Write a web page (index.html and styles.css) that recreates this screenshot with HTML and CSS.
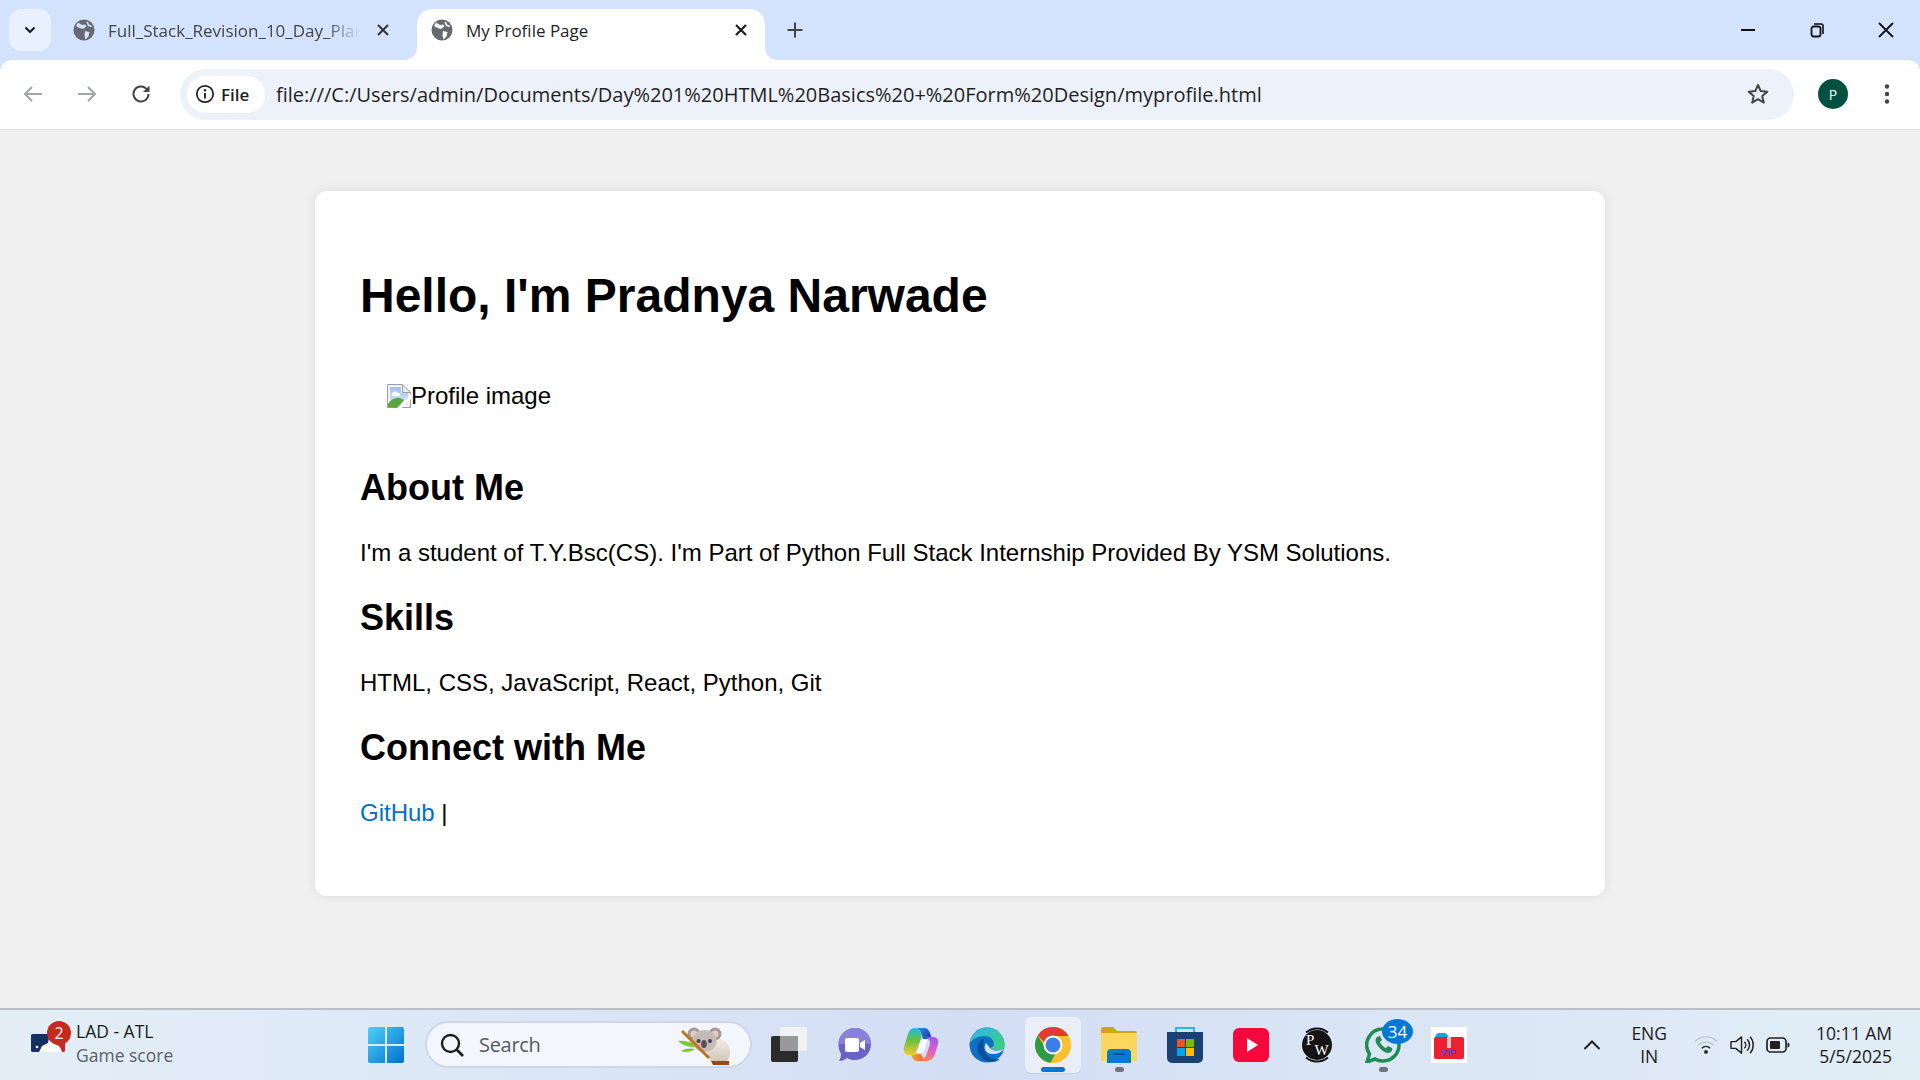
FILE: index.html
```html
<!DOCTYPE html>
<html lang="en">
<head>
<meta charset="utf-8">
<title>My Profile Page</title>
<link rel="stylesheet" href="styles.css">
</head>
<body>
<div class="screen">
  <header class="tabstrip">
    <button class="tab-search"><svg width="14" height="14" viewBox="0 0 14 14"><path d="M2.5 4.5 7 9l4.500-4.500" fill="none" stroke="#16202c" stroke-width="2.200"/></svg></button>
    <div class="tab">
      <svg class="globe" width="22" height="22" viewBox="0 0 22 22"><circle cx="11" cy="11" r="10.500" fill="#666a70"/><path d="M5 3.500 9 6l3-.5 1.500 2L10 10 6.500 9 3 7ZM12 12l4.500 1-1 4.500-3 3-1-4ZM15 2.500l1 3 3.500 1.500-1.500 1-3-1-1.500-3.500Z" fill="#d3e3fd"/></svg>
      <span class="tab-title fade">Full_Stack_Revision_10_Day_Plan</span>
      <svg class="close" width="14" height="14" viewBox="0 0 14 14"><path d="M2 2l10 10M12 2 2 12" stroke="#333" stroke-width="2"/></svg>
    </div>
    <div class="tab active">
      <svg class="globe" width="22" height="22" viewBox="0 0 22 22"><circle cx="11" cy="11" r="10.500" fill="#666a70"/><path d="M5 3.500 9 6l3-.5 1.500 2L10 10 6.500 9 3 7ZM12 12l4.500 1-1 4.500-3 3-1-4ZM15 2.500l1 3 3.500 1.500-1.500 1-3-1-1.500-3.500Z" fill="#fff"/></svg>
      <span class="tab-title">My Profile Page</span>
      <svg class="close" width="14" height="14" viewBox="0 0 14 14"><path d="M2 2l10 10M12 2 2 12" stroke="#1c1c1c" stroke-width="2.200"/></svg>
    </div>
    <svg class="newtab" width="18" height="18" viewBox="0 0 18 18"><path d="M9 1.500v15M1.500 9h15" stroke="#444" stroke-width="2"/></svg>
    <div class="window-controls">
      <svg width="16" height="16" viewBox="0 0 16 16"><path d="M1 8h14" stroke="#111" stroke-width="2"/></svg>
      <svg width="16" height="16" viewBox="0 0 16 16"><rect x="2.500" y="4.500" width="9" height="10" rx="2" fill="none" stroke="#111" stroke-width="1.800"/><path d="M5 2h7a2 2 0 0 1 2 2v8" fill="none" stroke="#111" stroke-width="1.600"/></svg>
      <svg width="16" height="16" viewBox="0 0 16 16"><path d="M1 1l14 14M15 1 1 15" stroke="#111" stroke-width="1.800"/></svg>
    </div>
  </header>

  <nav class="toolbar">
    <svg class="nav-icon" width="22" height="22" viewBox="0 0 22 22"><path d="M20 11H3M10 4l-7 7 7 7" fill="none" stroke="#a3a5a8" stroke-width="2"/></svg>
    <svg class="nav-icon" width="22" height="22" viewBox="0 0 22 22"><path d="M2 11h17M12 4l7 7-7 7" fill="none" stroke="#a3a5a8" stroke-width="2"/></svg>
    <svg class="nav-icon" width="22" height="22" viewBox="0 0 22 22"><path d="M18.500 11a7.500 7.500 0 1 1-2.300-5.400L18.500 8" fill="none" stroke="#444" stroke-width="2"/><path d="M19.500 2.500V9H13Z" fill="#444"/></svg>
    <div class="omnibox">
      <div class="chip">
        <svg width="20" height="20" viewBox="0 0 20 20"><circle cx="10" cy="10" r="8.200" fill="none" stroke="#222" stroke-width="1.700"/><path d="M10 9v5.500" stroke="#222" stroke-width="1.900"/><circle cx="10" cy="6.200" r="1.200" fill="#222"/></svg>
        <span>File</span>
      </div>
      <span class="url">file:///C:/Users/admin/Documents/Day%201%20HTML%20Basics%20+%20Form%20Design/myprofile.html</span>
      <svg class="star" width="24" height="24" viewBox="0 0 24 24"><path d="m12 3 2.700 6.100 6.600.6-5 4.400 1.500 6.500L12 17.200l-5.800 3.400 1.500-6.500-5-4.400 6.600-.6Z" fill="none" stroke="#444" stroke-width="2" stroke-linejoin="round"/></svg>
    </div>
    <div class="avatar">P</div>
    <svg class="menu" width="6" height="22" viewBox="0 0 6 22"><circle cx="3" cy="3.500" r="2.200" fill="#444"/><circle cx="3" cy="11" r="2.200" fill="#444"/><circle cx="3" cy="18.500" r="2.200" fill="#444"/></svg>
  </nav>

  <main class="page">
    <article class="card">
      <h1>Hello, I'm Pradnya Narwade</h1>
      <div class="broken-image">
        <svg width="24" height="24" viewBox="0 0 24 24"><defs><linearGradient id="sky" x1="0" y1="0" x2="0" y2="1"><stop offset="0" stop-color="#9fc0ee"/><stop offset="1" stop-color="#dfe9f9"/></linearGradient></defs><path d="M.5.500h15l8 8v15H.5Z" fill="#f4f4f4" stroke="#9a9ea5"/><path d="M3 3h11v6h7v12H3Z" fill="url(#sky)"/><path d="M5 10c1-3 5-3 6-1 2 0 3 2 2 3H6c-1 0-2-1-1-2Z" fill="#fff"/><path d="M15.500.500v8h8Z" fill="#e8eaed" stroke="#9a9ea5"/><path d="M1 23v-3c3-5 8-7 12-6l4 2-6 8Z" fill="#57a83a"/><path d="M24 10v5L15 24h-5Z" fill="#fff"/></svg><span>Profile image</span>
      </div>
      <section>
        <h2>About Me</h2>
        <p>I'm a student of T.Y.Bsc(CS). I'm Part of Python Full Stack Internship Provided By YSM Solutions.</p>
      </section>
      <section>
        <h2>Skills</h2>
        <p>HTML, CSS, JavaScript, React, Python, Git</p>
      </section>
      <section>
        <h2>Connect with Me</h2>
        <p><a href="#">GitHub</a> |</p>
      </section>
    </article>
  </main>

  <footer class="taskbar">
    <div class="widget">
      <div class="widget-icon">
        <svg width="34" height="18" viewBox="0 0 34 18"><rect width="34" height="18" rx="1.500" fill="#fff"/><path d="M1.500 0H19l-1 4-1 5-6 3-3 6H1.500A1.500 1.500 0 0 1 0 16.500v-15A1.500 1.500 0 0 1 1.500 0Z" fill="#142f63"/><path d="M24 0h8.500A1.500 1.500 0 0 1 34 1.500v15a1.500 1.500 0 0 1-1.500 1.500H31l-2-5-4-3-2-5Z" fill="#c8252b"/><circle cx="6" cy="13" r="1.300" fill="#fff"/></svg>
        <span class="widget-badge">2</span>
      </div>
      <div class="widget-text"><span class="widget-title">LAD - ATL</span><span class="widget-sub">Game score</span></div>
    </div>
    <svg class="start" width="36" height="36" viewBox="0 0 36 36"><defs><linearGradient id="win" x1="0" y1="0" x2="1" y2="1"><stop offset="0" stop-color="#4fd0f8"/><stop offset="1" stop-color="#0070cf"/></linearGradient></defs><path d="M2 0h15v17H0V2a2 2 0 0 1 2-2ZM19 0h15a2 2 0 0 1 2 2v15H19ZM0 19h17v17H2a2 2 0 0 1-2-2ZM19 19h17v15a2 2 0 0 1-2 2H19Z" fill="url(#win)"/></svg>
    <div class="search">
      <svg width="26" height="26" viewBox="0 0 26 26"><circle cx="11.500" cy="11.500" r="8.500" fill="none" stroke="#1c1c1c" stroke-width="2.400"/><path d="m18 18 6 6" stroke="#1c1c1c" stroke-width="2.600"/></svg>
      <span>Search</span>
      <svg class="koala" width="54" height="40" viewBox="0 0 54 40"><defs><linearGradient id="kb" x1="0" y1="0" x2="0" y2="1"><stop offset="0" stop-color="#f3ece6"/><stop offset="1" stop-color="#cdbfb2"/></linearGradient></defs><ellipse cx="41" cy="27" rx="11" ry="13" fill="url(#kb)"/><path d="M33 36h18v4H35Z" fill="#8f4a1e"/><path d="M0 16c7-1 14 1 20 6-7 1-15-1-20-6ZM3 26c5-3 10-3 14-2-4 3-10 4-14 2Z" fill="#7fc43a"/><circle cx="16" cy="9" r="6.500" fill="#a59a93"/><circle cx="16" cy="9" r="3.500" fill="#d8cfc9"/><circle cx="37" cy="9" r="6.500" fill="#a59a93"/><circle cx="37" cy="9" r="3.500" fill="#d8cfc9"/><ellipse cx="26.500" cy="16" rx="12" ry="11" fill="#c6bbb4"/><circle cx="20.500" cy="16" r="2" fill="#4a3a55"/><circle cx="32" cy="16" r="2" fill="#4a3a55"/><ellipse cx="26" cy="19" rx="2.800" ry="4" fill="#5f4a55"/><path d="M4 6 31 33" stroke="#b8771e" stroke-width="3"/></svg>
    </div>
    <div class="apps">
      <div class="app">
        <svg width="36" height="36" viewBox="0 0 36 36"><rect x="0" y="9" width="27" height="26" rx="2" fill="#2b2b2b"/><rect x="9" y="0" width="27" height="24" rx="1" fill="#f4f4f4" fill-opacity=".9"/><rect x="9" y="9" width="18" height="15" fill="#999"/></svg>
      </div>
      <div class="app">
        <svg width="36" height="36" viewBox="0 0 36 36"><path d="M18 1c9 0 16 7 16 16s-7 16-16 16c-3 0-6-.6-8-2-2 2-5 3-8 3 1-2 2-4 2-7-1.500-3-2.500-6-2.500-10C1.500 8 9 1 18 1Z" fill="#6b62c6"/><path d="M18 1c9 0 16 7 16 16H1.500C1.500 8 9 1 18 1Z" fill="#8a80d6"/><rect x="8" y="11" width="14" height="14" rx="2" fill="#fff"/><path d="m23 16 5-3v10l-5-3Z" fill="#fff"/></svg>
      </div>
      <div class="app">
        <svg width="36" height="36" viewBox="0 0 36 36"><defs><linearGradient id="co1" x1="0" y1="0" x2="1" y2=".3"><stop offset="0" stop-color="#1aa7e0"/><stop offset="1" stop-color="#1f3fc4"/></linearGradient><linearGradient id="co2" x1="0" y1="0" x2="0" y2="1"><stop offset="0" stop-color="#22b8e8"/><stop offset=".45" stop-color="#63c23f"/><stop offset="1" stop-color="#f8c92e"/></linearGradient><linearGradient id="co3" x1=".6" y1="0" x2=".4" y2="1"><stop offset="0" stop-color="#9a5af0"/><stop offset=".6" stop-color="#e65fc0"/><stop offset="1" stop-color="#f58a5a"/></linearGradient><linearGradient id="co4" x1="0" y1="0" x2="1" y2="0"><stop offset="0" stop-color="#f8a52e"/><stop offset="1" stop-color="#ef4d52"/></linearGradient></defs><path d="M12 1h9c3 0 5 2 6 5l2 6h-9l-2-6c-1-3-3-5-6-5Z" fill="url(#co1)"/><path d="M8 27h10l2 4c1 1 2 3 5 3H14c-3 0-5-3-6-7Z" fill="url(#co4)"/><path d="M12 1c-4 0-6 3-7 6L1 20c-1 4 1 8 5 8h7l3-10 2-6c1-5-1-11-6-11Z" fill="url(#co2)"/><path d="M21 10h9c4 0 6 3 5 7l-3 10c-1 4-4 7-8 7-3 0-5-1-5-3 3 0 4-2 5-5l3-9c1-3-2-7-6-7Z" fill="url(#co3)"/><path d="M18 12h7l-5 14h-7Z" fill="#fff" fill-opacity=".9"/></svg>
      </div>
      <div class="app">
        <svg width="36" height="36" viewBox="0 0 36 36"><defs><linearGradient id="ed1" x1="0" y1="0" x2="1" y2="1"><stop offset="0" stop-color="#2fb6ee"/><stop offset="1" stop-color="#3fd273"/></linearGradient></defs><circle cx="18" cy="18" r="17.500" fill="#0c71c3"/><path d="M1 15C3 6 10 .5 18 .5 28 .5 35.500 8 35.500 18.500c0 3-3 5-8 5-4 0-6-1-6-2.500 3-1 4-3 3-6-1-4-5-6-9-6-6 0-12 3-13.500 6Z" fill="url(#ed1)"/><path d="M17 16c-3 4-1 11 6 11 5 .5 9-1 12.500-5.500V36H36V21c-3 3-13 4-15 0Z" fill="#d8e2f5"/><path d="M15 12c-5 1-8 6-6 13 2 6 8 10 14 10 3 0 6-1 8-3-5 1-12-1-15-6-2-4-2-9-1-14Z" fill="#0a4f9e"/></svg>
      </div>
      <div class="app current">
        <svg width="36" height="36" viewBox="0 0 36 36"><circle cx="18" cy="18" r="18" fill="#fbc02d"/><path d="M18 0a18 18 0 0 1 15.600 9H18a9 9 0 0 0-8.600 6.400L2.800 8.400A18 18 0 0 1 18 0Z" fill="#e53a2f"/><path d="M2.800 8.400 10 20.500a9 9 0 0 0 10.500 6.100L15.500 35.800A18 18 0 0 1 2.800 8.400Z" fill="#2d9a46"/><circle cx="18" cy="18" r="9.500" fill="#fff"/><circle cx="18" cy="18" r="7.500" fill="#3f7de8"/></svg>
      </div>
      <div class="app dot">
        <svg width="36" height="36" viewBox="0 0 36 36"><path d="M0 2a2 2 0 0 1 2-2h10l4 4h18a2 2 0 0 1 2 2v6H0Z" fill="#d8a215"/><path d="M0 6h36v28H0Z" fill="#fbd75e"/><path d="M6 36V26a4 4 0 0 1 4-4h16a4 4 0 0 1 4 4v10Z" fill="#0a7ad1"/><rect x="12" y="26" width="12" height="2" fill="#064f8e"/></svg>
      </div>
      <div class="app">
        <svg width="36" height="36" viewBox="0 0 36 36"><path d="M9 6V1h18v5" fill="none" stroke="#29b6e8" stroke-width="2"/><path d="M0 5h36v26a5 5 0 0 1-5 5H5a5 5 0 0 1-5-5Z" fill="#1a4173"/><rect x="10" y="12" width="8" height="8" fill="#f25022"/><rect x="19" y="12" width="8" height="8" fill="#7fba00"/><rect x="10" y="21" width="8" height="8" fill="#00a4ef"/><rect x="19" y="21" width="8" height="8" fill="#ffb900"/></svg>
      </div>
      <div class="app">
        <svg width="36" height="36" viewBox="0 0 36 36"><rect y="1" width="36" height="34" rx="6" fill="#f5093c"/><path d="m14 11 11 7-11 7Z" fill="#fff"/></svg>
      </div>
      <div class="app">
        <svg width="36" height="36" viewBox="0 0 36 36"><circle cx="18" cy="18" r="15" fill="#141414"/><path d="M7 5.500A17 17 0 0 1 29 5.500M29 30.500A17 17 0 0 1 7 30.500" fill="none" stroke="#141414" stroke-width="2"/><text class="pw-mark" x="7" y="18">P</text><text class="pw-mark" x="15.500" y="28">W</text></svg>
      </div>
      <div class="app dot">
        <svg width="36" height="36" viewBox="0 0 36 36"><path d="M18 2a16 16 0 0 1 0 32c-3 0-6-.8-8-2l-8 3 2.500-8A16 16 0 0 1 18 2Z" fill="none" stroke="#1f8c55" stroke-width="3.500"/><path d="M12 10c-2 2-2 5 1 9s7 7 10 7 5-3 4-5l-4-2-2 2c-2-.5-5-3.500-6-6l2-2-2-4Z" fill="#1f8c55"/></svg>
        <span class="app-badge">34</span>
      </div>
      <div class="app">
        <svg width="36" height="36" viewBox="0 0 36 36"><rect width="36" height="36" fill="#fff"/><path d="M4 11c0-3 2-5 5-5h4c2 0 4 2 5 5Z" fill="#1ba1e2"/><rect x="3" y="10" width="30" height="22" rx="2" fill="#ed2030"/><rect x="16" y="10" width="4" height="11" fill="#f5c0c8"/><text class="zip-mark" x="18" y="29">ZIP</text></svg>
      </div>
    </div>
    <div class="tray">
      <svg width="18" height="12" viewBox="0 0 18 12"><path d="M1.500 10 9 2.500l7.500 7.500" fill="none" stroke="#222" stroke-width="2"/></svg>
      <div class="lang"><span>ENG</span><span>IN</span></div>
      <div class="status">
        <svg width="24" height="22" viewBox="0 0 26 22"><path d="M1 7a17 17 0 0 1 24 0M5 11a11.500 11.500 0 0 1 16 0" fill="none" stroke="#b9bfc5" stroke-width="1.300"/><path d="M8.500 14.500a6 6 0 0 1 9 0" fill="none" stroke="#222" stroke-width="1.500"/><circle cx="13" cy="18.500" r="2" fill="#222"/></svg>
        <svg width="24" height="22" viewBox="0 0 25 22"><path d="M1 7.500h5L12 2.500v17L6 14.500H1Z" fill="none" stroke="#222" stroke-width="1.500" stroke-linejoin="round"/><path d="M15 7.500a5 5 0 0 1 0 7M18 5a9 9 0 0 1 0 12M21 2.500a13 13 0 0 1 0 17" fill="none" stroke="#222" stroke-width="1.500"/></svg>
        <svg width="24" height="16" viewBox="0 0 24 16"><rect x="1" y="1" width="19" height="14" rx="3.500" fill="none" stroke="#222" stroke-width="1.700"/><rect x="4" y="4" width="10" height="8" rx="1" fill="#222"/><path d="M21.500 5.500c1.500 0 2 1 2 2.500s-.5 2.500-2 2.500Z" fill="#222"/></svg>
      </div>
      <div class="clock"><span>10:11 AM</span><span>5/5/2025</span></div>
    </div>
  </footer>
</div>
</body>
</html>
```
FILE: styles.css
```css
* { box-sizing: border-box; }
html, body { margin: 0; height: 100%; overflow: hidden; }
body { font-family: "Open Sans", "Noto Sans", sans-serif; }
.screen { width: 1920px; height: 1080px; display: flex; flex-direction: column; background: #d3e3fd; }

.tabstrip { height: 60px; flex: none; background: #d3e3fd; display: flex; align-items: flex-start; padding: 9px 0 0 9px; }
.tab-search { width: 42px; height: 42px; border: 0; border-radius: 12px; background: #e9f0fe; padding: 0; display: flex; align-items: center; justify-content: center; }
.tab { height: 51px; display: flex; align-items: center; flex: none; padding-bottom: 9px; }
.tab:not(.active) { width: 357px; padding-left: 22px; padding-right: 18px; }
.tab.active { width: 348px; background: #fff; border-radius: 15px 15px 0 0; padding-left: 14px; padding-right: 17px; margin-left: 9px; position: relative; }
.tab.active::before, .tab.active::after { content: ""; position: absolute; bottom: 0; width: 12px; height: 12px; }
.tab.active::before { left: -12px; background: radial-gradient(circle at 0 0, #d3e3fd 11.500px, #fff 12px); }
.tab.active::after { right: -12px; background: radial-gradient(circle at 100% 0, #d3e3fd 11.500px, #fff 12px); }
.globe { flex: none; }
.tab-title { flex: 1; min-width: 0; margin-left: 13px; font-size: 17px; white-space: nowrap; color: #1f1f1f; }
.tab-title.fade { color: #444; -webkit-mask-image: linear-gradient(90deg, #000 218px, transparent 252px); mask-image: linear-gradient(90deg, #000 218px, transparent 252px); }
.close { flex: none; margin-left: 8px; }
.tab.active .close { margin-left: 18px; }
.newtab { margin: 12px 0 0 21px; flex: none; }
.window-controls { margin-left: auto; display: flex; gap: 53px; padding: 13px 26px 0 0; }

.toolbar { height: 70px; flex: none; background: #fff; border-bottom: 1px solid #dcdfe3; display: flex; align-items: center; border-radius: 12px 12px 0 0; padding: 0 16px 1px 22px; }
.nav-icon { flex: none; margin-right: 32px; }
.nav-icon:nth-child(3) { margin-right: 28px; }
.omnibox { width: 1614px; height: 51px; flex: none; background: #edf2fa; border-radius: 26px; display: flex; align-items: center; padding: 0 24px 0 7px; }
.chip { height: 37px; width: 78px; border-radius: 19px; background: #fff; display: flex; align-items: center; gap: 6px; padding-left: 8px; font-size: 17px; font-weight: 600; color: #1f1f1f; }
.url { margin-left: 11px; font-size: 20px; color: #1f1f1f; white-space: nowrap; flex: 1; }
.star { flex: none; }
.avatar { width: 30px; height: 30px; margin-left: 24px; border-radius: 50%; background: #00513f; color: #fff; display: flex; align-items: center; justify-content: center; font-size: 14px; flex: none; }
.menu { margin-left: 36px; flex: none; }

.page { flex: 1; min-height: 0; background: #f0f0f0; padding-top: 61px; }
.card { width: 1290px; height: 705px; margin: 0 auto; background: #fff; border-radius: 12px; box-shadow: 0 0 12px rgba(0,0,0,.08); padding: 45px; font-family: "Liberation Sans", Arial, sans-serif; color: #000; }
h1 { font-size: 48px; line-height: 55px; margin: 32px 0 0; font-weight: 700; }
.broken-image { display: flex; align-items: center; height: 30px; margin: 58px 0 0 27px; font-size: 24px; }
.broken-image svg { flex: none; }
h2 { font-size: 36px; line-height: 41px; margin: 0; font-weight: 700; }
.broken-image + section { margin-top: 56px; }
section + section { margin-top: 30px; }
p { font-size: 24px; line-height: 28px; margin: 31px 0 0; }
a { color: #0070c9; text-decoration: none; }

.taskbar { height: 72px; flex: none; border-top: 2px solid #b9bfc6; background: linear-gradient(90deg, #e3eef7 0%, #dce8f6 25%, #d3def5 50%, #dbe6f5 75%, #e2eef6 100%); display: flex; align-items: center; padding: 0 0 1px 31px; }
.widget { width: 341px; display: flex; align-items: center; flex: none; }
.widget-icon { position: relative; width: 34px; height: 18px; margin-bottom: 4px; }
.widget-icon svg { display: block; }
.widget-badge { position: absolute; left: 16px; top: -13px; width: 24px; height: 24px; border-radius: 50%; background: #c42b1c; color: #fff; font-size: 16px; text-align: center; line-height: 24px; }
.widget-text { display: flex; flex-direction: column; margin-left: 11px; margin-bottom: 3px; }
.widget-title { font-size: 17.500px; line-height: 24px; color: #1a1a1a; }
.widget-sub { font-size: 17.500px; line-height: 24px; color: #5b6168; }
.start { flex: none; margin-left: -4px; }
.search { width: 327px; height: 47px; flex: none; margin-left: 21px; background: #f3f6fd; border: 2px solid #cdd7e8; border-radius: 24px; display: flex; align-items: center; padding-left: 12px; position: relative; }
.search span { font-size: 20px; color: #55595f; margin-left: 14px; letter-spacing: -.3px; }
.koala { position: absolute; right: 18px; top: 2px; }
.apps { display: flex; margin-left: 4px; flex: none; }
.app { width: 66px; height: 56px; display: flex; align-items: center; justify-content: center; position: relative; border-radius: 6px; }
.app.current { background: #eaeef8; box-shadow: 0 1px 1px #c5cde0; width: 56px; margin: 0 5px; }
.app.current::after { content: ""; position: absolute; left: 16px; bottom: 1px; width: 24px; height: 5px; border-radius: 3px; background: #0078d4; }
.app.dot::after { content: ""; position: absolute; left: 29px; bottom: 1px; width: 9px; height: 5px; border-radius: 3px; background: #70757d; }
.app-badge { position: absolute; left: 32px; top: 2px; width: 31px; height: 25px; border-radius: 50%; background: #0078d4; color: #fff; font-size: 17px; text-align: center; line-height: 25px; }
.pw-mark { font: 400 15px "Liberation Serif", serif; fill: #fff; }
.zip-mark { font: 700 9px "Liberation Sans", sans-serif; fill: #5a3fd0; text-anchor: middle; }
.tray { margin-left: auto; display: flex; align-items: center; padding-right: 28px; flex: none; }
.lang { display: flex; flex-direction: column; align-items: center; font-size: 17.500px; line-height: 23px; color: #1a1a1a; margin-left: 30px; }
.status { display: flex; align-items: center; gap: 12px; margin-left: 27px; }
.clock { display: flex; flex-direction: column; align-items: flex-end; font-size: 17.500px; line-height: 23px; color: #1a1a1a; margin-left: 26px; }
```
